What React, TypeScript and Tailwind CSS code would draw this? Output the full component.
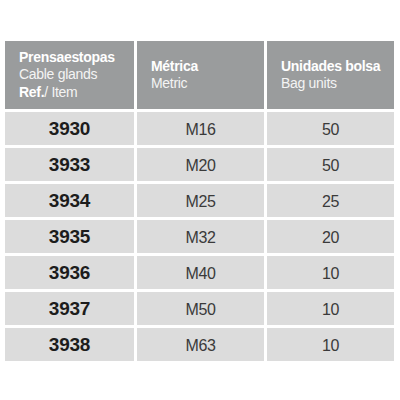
import * as React from "react";

type Row = { ref: string; metric: string; units: string };

const rows: Row[] = [
  { ref: "3930", metric: "M16", units: "50" },
  { ref: "3933", metric: "M20", units: "50" },
  { ref: "3934", metric: "M25", units: "25" },
  { ref: "3935", metric: "M32", units: "20" },
  { ref: "3936", metric: "M40", units: "10" },
  { ref: "3937", metric: "M50", units: "10" },
  { ref: "3938", metric: "M63", units: "10" },
];

function HeadCell({ children }: { children: React.ReactNode }) {
  return (
    <div className="bg-[#9a9c9d] text-white flex flex-col justify-center pl-[14px] text-[14px] leading-[17.5px] tracking-[-0.3px]">
      {children}
    </div>
  );
}

function BodyCell({ children, bold }: { children: React.ReactNode; bold?: boolean }) {
  return (
    <div
      className={
        bold
          ? "bg-[#dcdcdc] flex items-center justify-center pt-[2px] text-[19px] font-bold text-[#1c1c1c] tracking-[-0.2px]"
          : "bg-[#dcdcdc] flex items-center justify-center pt-[2px] text-[16px] text-[#3a3a3a] tracking-[-0.3px]"
      }
    >
      {children}
    </div>
  );
}

export default function App() {
  return (
    <div
      className="w-[400px] h-[400px] bg-white pt-[41px] pl-[5px]"
      style={{ fontFamily: '"Liberation Sans", Arial, sans-serif' }}
    >
      <div className="grid grid-cols-[129px_127px_127px] gap-x-[3px] gap-y-[3px] grid-rows-[68px_repeat(7,33px)]">
        <HeadCell>
          <span className="font-bold">Prensaestopas</span>
          <span className="text-[#f4f4f4]">Cable glands</span>
          <span>
            <span className="font-bold">Ref.</span>
            <span className="text-[#f4f4f4]">/ Item</span>
          </span>
        </HeadCell>
        <HeadCell>
          <span className="font-bold">Métrica</span>
          <span className="text-[#f4f4f4]">Metric</span>
        </HeadCell>
        <HeadCell>
          <span className="font-bold">Unidades bolsa</span>
          <span className="text-[#f4f4f4]">Bag units</span>
        </HeadCell>
        {rows.map((r) => (
          <React.Fragment key={r.ref}>
            <BodyCell bold>{r.ref}</BodyCell>
            <BodyCell>{r.metric}</BodyCell>
            <BodyCell>{r.units}</BodyCell>
          </React.Fragment>
        ))}
      </div>
    </div>
  );
}
